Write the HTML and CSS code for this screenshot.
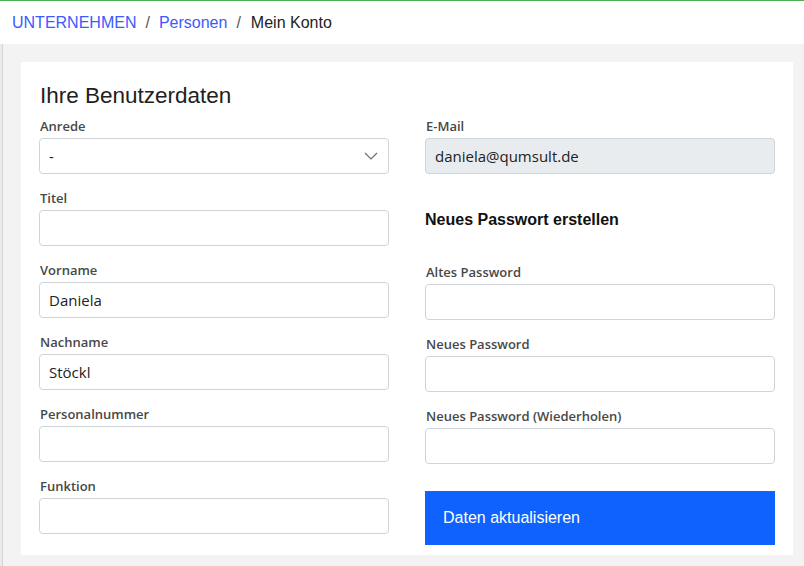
FILE: index.html
```html
<!DOCTYPE html>
<html lang="de">
<head>
<meta charset="utf-8">
<title>Mein Konto</title>
<link rel="stylesheet" href="styles.css">
</head>
<body>
<div class="frame">
  <div class="edge"></div>
  <div class="app">
    <header class="topbar">
      <nav class="breadcrumb">
        <a href="#" class="crumb-link">UNTERNEHMEN</a>
        <span class="sep">/</span>
        <a href="#" class="crumb-link">Personen</a>
        <span class="sep">/</span>
        <span class="crumb-current">Mein Konto</span>
      </nav>
    </header>
    <main class="content">
      <section class="card">
        <h1 class="card-title">Ihre Benutzerdaten</h1>
        <div class="cols">
          <div class="col">
            <div class="group">
              <label class="lbl">Anrede</label>
              <div class="select">
                <span class="select-val">-</span>
                <svg class="chev" width="14" height="8" viewBox="0 0 14 8"><path d="M1 1 L7 7 L13 1" fill="none" stroke="#6b6f75" stroke-width="1.2"/></svg>
              </div>
            </div>
            <div class="group">
              <label class="lbl">Titel</label>
              <div class="input"></div>
            </div>
            <div class="group">
              <label class="lbl">Vorname</label>
              <div class="input">Daniela</div>
            </div>
            <div class="group">
              <label class="lbl">Nachname</label>
              <div class="input">Stöckl</div>
            </div>
            <div class="group">
              <label class="lbl">Personalnummer</label>
              <div class="input"></div>
            </div>
            <div class="group last">
              <label class="lbl">Funktion</label>
              <div class="input"></div>
            </div>
          </div>
          <div class="col">
            <div class="group">
              <label class="lbl">E-Mail</label>
              <div class="input disabled">daniela@qumsult.de</div>
            </div>
            <h2 class="sub">Neues Passwort erstellen</h2>
            <div class="group">
              <label class="lbl">Altes Password</label>
              <div class="input"></div>
            </div>
            <div class="group">
              <label class="lbl">Neues Password</label>
              <div class="input"></div>
            </div>
            <div class="group">
              <label class="lbl">Neues Password (Wiederholen)</label>
              <div class="input"></div>
            </div>
            <button class="btn">Daten aktualisieren</button>
          </div>
        </div>
      </section>
    </main>
  </div>
</div>
</body>
</html>
```
FILE: styles.css
```css
html, body {
  margin: 0;
  padding: 0;
  height: 100%;
}
body {
  background: #f3f3f3;
  font-family: "Liberation Sans", Arial, sans-serif;
  color: #212121;
}
.frame {
  display: flex;
  min-height: 566px;
}
.edge {
  width: 2px;
  flex: 0 0 2px;
  background: linear-gradient(#ffffff 0, #ffffff 18px, #ebebeb 18px);
  border-right: 1px solid #d4d4d4;
}
.app {
  flex: 1;
  display: flex;
  flex-direction: column;
}
.topbar {
  background: #fff;
  border-top: 1px solid #4caf50;
  height: 43px;
  display: flex;
  align-items: center;
  margin-left: -3px;
  padding-left: 12px;
}
.breadcrumb {
  font-size: 16px;
  display: flex;
  align-items: center;
  margin-top: 1px;
}
.crumb-link {
  color: #3b5bfd;
  text-decoration: none;
}
.sep {
  color: #555;
  padding: 0 9px 0 9px;
}
.crumb-current {
  color: #222;
  padding-left: 1px;
}
.content {
  flex: 1;
  padding: 18px 11px 11px 18px;
}
.card {
  background: #fff;
  padding: 20px 18px 10px 18px;
}
.card-title {
  margin: 0 0 6px 0;
  font-size: 22.5px;
  line-height: 28px;
  font-weight: 400;
  color: #212121;
  padding-left: 1px;
}
.cols {
  display: grid;
  grid-template-columns: 350px 350px;
  column-gap: 36px;
  align-items: start;
}
.group {
  margin-bottom: 14px;
}
.group.last {
  margin-bottom: 0;
}
.lbl {
  display: block;
  font-family: "Open Sans", "Noto Sans", sans-serif;
  font-size: 13px;
  font-weight: 570;
  line-height: 20px;
  color: #484848;
  margin-bottom: 2px;
  padding-left: 1px;
}
.input, .select {
  box-sizing: border-box;
  height: 36px;
  border: 1px solid #ced4da;
  border-radius: 4px;
  background: #fff;
  font-family: "Open Sans", "Noto Sans", sans-serif;
  font-size: 15px;
  line-height: 34px;
  color: #222;
  padding: 0 9px;
}
.input.disabled {
  background: #e9ecef;
}
.select {
  display: flex;
  align-items: center;
  justify-content: space-between;
  padding-right: 10px;
}
.chev {
  display: block;
}
.sub {
  margin: 36px 0 32px 0;
  font-size: 16px;
  line-height: 20px;
  font-weight: 700;
  color: #111;
}
.btn {
  display: block;
  width: 350px;
  height: 54px;
  margin-top: 27px;
  border: none;
  border-radius: 0;
  background: #0f62fe;
  color: #fff;
  font-family: "Liberation Sans", Arial, sans-serif;
  font-size: 16px;
  text-align: left;
  padding: 0 18px;
}
```
